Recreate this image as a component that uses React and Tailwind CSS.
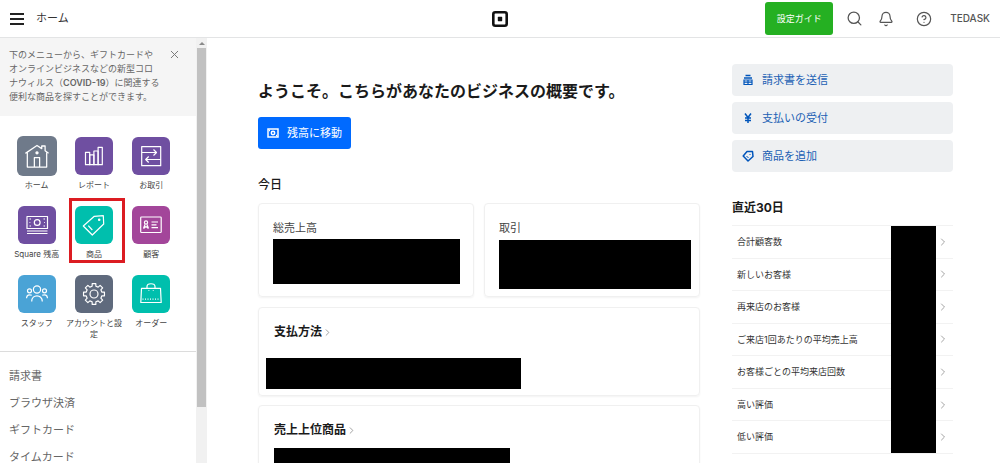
// App.jsx
import React from 'react';
import { Bell, ChevronRight, CircleHelp, Search, X } from 'lucide-react';

// 8-tooth gear outline centred on 19,19
const gearPoints = Array.from({ length: 8 })
  .flatMap((_, i) => {
    const base = (i * Math.PI) / 4;
    return [
      [base - 0.24, 8],
      [base - 0.17, 10.6],
      [base + 0.17, 10.6],
      [base + 0.24, 8],
    ].map(([a, r]) => `${(19 + r * Math.sin(a)).toFixed(2)},${(19 - r * Math.cos(a)).toFixed(2)}`);
  })
  .join(' ');

const apps = [
  {
    name: 'ホーム',
    color: 'bg-[#6f7a8a]',
    large: true,
    icon: (
      <>
        <path d="M8 16.5 19 9l4.5 3V9.500h3.200V14l3.300 2.500" />
        <path d="M9.800 15.500V29.500H28.200V15.500" />
        <path d="M16.500 29.500V20.500h5V29.500" />
        <circle cx="19" cy="16" r="1" fill="white" />
      </>
    ),
  },
  {
    name: 'レポート',
    color: 'bg-[#6f4fa1]',
    icon: (
      <>
        <path d="M10.500 15.300h4.200V27.700h-4.200z" />
        <path d="M14.700 17.800h4.200V27.700h-4.200z" />
        <path d="M18.900 14h4.200V27.700h-4.200z" />
        <path d="M23.100 10.300h4.200V27.700h-4.200z" />
      </>
    ),
  },
  {
    name: 'お取引',
    color: 'bg-[#6f4fa1]',
    icon: (
      <>
        <rect x="9.7" y="9.7" width="19" height="19" />
        <path d="M9.700 15.500H24.500M21.500 12.500l3 3-3 3" />
        <path d="M28.700 22.500H13.700M16.700 19.500l-3 3 3 3" />
      </>
    ),
  },
  {
    name: 'Square 残高',
    color: 'bg-[#6f4fa1]',
    icon: (
      <>
        <rect x="9" y="10.5" width="20.5" height="12" />
        <circle cx="19.2" cy="16.5" r="2.9" />
        <path d="M11.500 13h1.500M25.500 13H27M11.500 20h1.500M25.500 20H27M11.500 16.500h.8M26.200 16.500h.8" />
        <path d="M9 25H29.500M9 27.500H29.500" />
      </>
    ),
  },
  {
    name: '商品',
    color: 'bg-[#00bfad]',
    marked: true,
    icon: (
      <>
        <path d="M19.300 10.300 28.300 9.700 28.700 18 17.300 29 8.300 20z" />
        <circle cx="24.2" cy="13.8" r="0.7" fill="white" />
        <path d="M13.300 19.700 17.300 24" />
      </>
    ),
  },
  {
    name: '顧客',
    color: 'bg-[#a3469a]',
    icon: (
      <>
        <rect x="8.7" y="11" width="20.5" height="15.500" rx="0.8" />
        <circle cx="14" cy="16.5" r="1.6" />
        <path d="M11.500 22.500 13 18.500M16.500 22.500 15 18.500M11.500 22.500 14 20.500 16.500 22.500" />
        <path d="M19.500 16H26M19.500 18.800H24.500M19.500 21.600H26" />
      </>
    ),
  },
  {
    name: 'スタッフ',
    color: 'bg-[#4aa3d6]',
    icon: (
      <>
        <circle cx="19" cy="14.500" r="3.600" />
        <path d="M13.700 26.500C13.700 19 24.300 19 24.300 26.500" />
        <circle cx="11.500" cy="15.800" r="2" />
        <circle cx="26.500" cy="15.800" r="2" />
        <path d="M8.500 23.300C8.700 20 11 19.200 13.800 20.300" />
        <path d="M29.500 23.300C29.300 20 27 19.200 24.200 20.300" />
      </>
    ),
  },
  {
    name: 'アカウントと設定',
    color: 'bg-[#5f6a7d]',
    icon: (
      <>
        <polygon points={gearPoints} />
        <circle cx="19" cy="19" r="4" />
      </>
    ),
  },
  {
    name: 'オーダー',
    color: 'bg-[#00bfad]',
    icon: (
      <>
        <path d="M9.500 13.300H28.500L29.200 27.500H8.800z" />
        <path d="M15 13.300V11.500C15 7.800 23 7.800 23 11.500V13.300" />
        <path d="M16.500 15.500h.8M20.800 15.500h.8" />
        <path d="M10.500 24.200H28" strokeDasharray="1 1.5" />
      </>
    ),
  },
];

const menuItems = ['請求書', 'ブラウザ決済', 'ギフトカード', 'タイムカード'];

const actions = [
  {
    name: '請求書を送信',
    icon: (
      <>
        <path d="M3.500 1.500h5M2 4h8" />
        <path d="M2 6h8v4.500H2zM2 8.200h8M6 6v4.500" strokeWidth="1.200" />
      </>
    ),
  },
  { name: '支払いの受付', icon: <path d="M3 1.500 6 5.500 9 1.500M6 5.500V11M3 6h6M3 8.500h6" /> },
  {
    name: '商品を追加',
    icon: (
      <>
        <path d="M5 1.500h5.500L11 6.500 6 11 1.200 6z" strokeLinejoin="round" />
        <path d="M7.500 4.500h1M4.500 6l2 2" strokeWidth="1" />
      </>
    ),
  },
];

const stats = [
  '合計顧客数',
  '新しいお客様',
  '再来店のお客様',
  'ご来店1回あたりの平均売上高',
  'お客様ごとの平均来店回数',
  '高い評価',
  '低い評価',
];

const Header = () => (
  <header className="grid grid-cols-[1fr_auto_1fr] items-center h-[38px] shrink-0 border-b border-[#e3e4e5] bg-white">
    <div className="flex items-center gap-3 pl-[10px]">
      <button aria-label="メニュー" className="flex flex-col gap-[3px] w-[14px]">
        <span className="h-[2px] w-full bg-[#222]" />
        <span className="h-[2px] w-full bg-[#222]" />
        <span className="h-[2px] w-full bg-[#222]" />
      </button>
      <span className="text-[11px] text-[#333]">ホーム</span>
    </div>
    <svg className="w-4 h-4" viewBox="0 0 16 16">
      <rect x="1.300" y="1.300" width="13.400" height="13.400" rx="2" fill="none" stroke="#111" strokeWidth="2.600" />
      <rect x="5.800" y="5.800" width="4.400" height="4.400" rx="0.6" fill="#111" />
    </svg>
    <div className="flex items-center justify-end pr-[10px] text-[#555]">
      <button className="h-[33px] w-[68px] mr-[13px] rounded-[3px] bg-[#25b022] text-[9px] text-white">設定ガイド</button>
      <button aria-label="検索" className="mr-[15px]">
        <Search size={17} strokeWidth={1.8} />
      </button>
      <button aria-label="通知" className="mr-[22px]">
        <Bell size={16} strokeWidth={1.8} />
      </button>
      <button aria-label="ヘルプ" className="mr-[18px]">
        <CircleHelp size={16} strokeWidth={1.8} />
      </button>
      <button className="text-[10px] font-medium">TEDASK</button>
    </div>
  </header>
);

const AppTile = ({ app }) => (
  <a href="#" className="relative flex flex-col items-center">
    {app.marked && <span className="absolute -top-2 left-1 -right-[2px] h-[65px] border-[3px] border-[#dc1c22]" />}
    <span className="flex items-center justify-center h-[38px]">
      <svg
        className={`${app.large ? 'w-10 h-10' : 'w-[38px] h-[38px]'} shrink-0 rounded-[6px] ${app.color}`}
        viewBox="0 0 38 38"
        fill="none"
        stroke="white"
        strokeWidth="1.2"
        strokeLinejoin="round"
      >
        {app.icon}
      </svg>
    </span>
    <span className="mt-[5px] text-center text-[8px] leading-[11px] text-[#444]">{app.name}</span>
  </a>
);

const Sidebar = () => (
  <aside className="flex w-[207px] shrink-0 overflow-hidden">
    <div className="flex-1">
      <div className="flex items-start justify-between h-[78px] pl-[9px] pr-[15px] pt-[10px] bg-[#f5f5f5]">
        <p className="text-[9px] leading-[14px] text-[#666]">
          下のメニューから、ギフトカードや
          <br />
          オンラインビジネスなどの新型コロ
          <br />
          ナウィルス（<b className="font-semibold">COVID-19</b>）に関連する
          <br />
          便利な商品を探すことができます。
        </p>
        <button aria-label="閉じる" className="text-[#777]">
          <X size={13} strokeWidth={1.8} />
        </button>
      </div>
      <nav className="grid grid-cols-3 auto-rows-[69px] pl-2 pr-4 pt-[21px] pb-[7px] border-b border-[#dcdcdc]">
        {apps.map((app) => (
          <AppTile key={app.name} app={app} />
        ))}
      </nav>
      <ul className="pt-[11px]">
        {menuItems.map((item) => (
          <li key={item} className="flex items-center h-[27px] pl-[9px]">
            <a href="#" className="text-[11px] text-[#666]">{item}</a>
          </li>
        ))}
      </ul>
    </div>
    {/* Scroll track */}
    <div className="w-[11px] bg-[#f1f1f1]">
      <div className="flex items-center justify-center h-[10px]">
        <span className="border-x-[3px] border-b-[3px] border-x-transparent border-b-[#8a8a8a]" />
      </div>
      <div className="h-[359px] w-[9px] mx-auto bg-[#c1c1c1]" />
    </div>
  </aside>
);

const Overview = () => (
  <section className="flex-[2] min-w-0">
    <h1 className="mt-[41px] text-[16px] leading-6 font-bold text-[#1a1a1a]">
      ようこそ。こちらがあなたのビジネスの概要です。
    </h1>
    <button className="flex items-center gap-2 h-8 mt-[14px] px-[9px] rounded-[3px] bg-[#006aff] text-[11px] text-white">
      <svg className="w-3 h-3" viewBox="0 0 12 12" fill="none" stroke="white" strokeWidth="1.500">
        <rect x="1" y="2" width="10" height="8" />
        <circle cx="6" cy="6" r="1.700" />
        <path d="M2 3.500h1M9 8.500h1" />
      </svg>
      残高に移動
    </button>
    <h2 className="mt-[27px] text-[12px] leading-[18px] font-medium text-[#1a1a1a]">今日</h2>
    <div className="grid grid-cols-2 gap-[10px] mt-[9px]">
      <div className="h-[94px] pl-[14px] pt-4 pr-2 rounded border border-[#f0f0f0] shadow-xs">
        <h3 className="text-[11px] leading-4 text-[#444]">総売上高</h3>
        <div className="h-[45px] w-[187px] max-w-full mt-[3px] bg-black" />
      </div>
      <div className="h-[94px] pl-[14px] pt-4 pr-2 rounded border border-[#f0f0f0] shadow-xs">
        <h3 className="text-[11px] leading-4 text-[#444]">取引</h3>
        <div className="h-[49px] w-[192px] max-w-full mt-1 bg-black" />
      </div>
    </div>
    <div className="h-[89px] mt-[10px] pl-[7px] pt-[15px] rounded border border-[#f0f0f0] shadow-xs">
      <h3 className="pl-2 text-[12px] leading-[18px] font-bold text-[#1a1a1a]">
        <a href="#" className="inline-flex items-center">
          支払方法
          <ChevronRight size={11} className="text-[#999]" />
        </a>
      </h3>
      <div className="h-[31px] w-[255px] mt-[17px] bg-black" />
    </div>
    <div className="mt-[9px] px-[15px] pt-[15px] pb-4 rounded border border-[#f0f0f0] shadow-xs">
      <h3 className="text-[12px] leading-[18px] font-bold text-[#1a1a1a]">
        <a href="#" className="inline-flex items-center">
          売上上位商品
          <ChevronRight size={11} className="text-[#999]" />
        </a>
      </h3>
      <div className="h-[60px] w-[236px] mt-[9px] bg-black" />
    </div>
  </section>
);

const RightColumn = () => (
  <section className="flex-1 min-w-0 pt-[26px]">
    <div className="flex flex-col gap-[6px]">
      {actions.map((action) => (
        <button
          key={action.name}
          className="flex items-center gap-2 h-8 px-[10px] rounded bg-[#eef0f2] text-[11px] text-[#1a5fb4]"
        >
          <svg className="w-3 h-3" viewBox="0 0 12 12" fill="none" stroke="#0055bb" strokeWidth="1.500">
            {action.icon}
          </svg>
          {action.name}
        </button>
      ))}
    </div>
    <h2 className="mt-[27px] text-[12px] leading-[18px] font-bold text-[#1a1a1a]">直近30日</h2>
    <div className="relative mt-2">
      <table className="w-full h-[229px] text-[9px] text-[#333] border-t border-[#f2f2f2]">
        <tbody>
          {stats.map((stat) => (
            <tr key={stat} className="border-b border-[#f2f2f2]">
              <th scope="row" className="pl-[5px] text-left font-normal">{stat}</th>
              <td className="w-4 pr-1">
                <a href="#" aria-label={stat} className="flex justify-center text-[#999]">
                  <ChevronRight size={12} strokeWidth={1.8} />
                </a>
              </td>
            </tr>
          ))}
        </tbody>
      </table>
      {/* Hidden values */}
      <div className="absolute top-px bottom-px right-[17px] w-[45px] bg-black" />
    </div>
  </section>
);

export default function App() {
  return (
    <div className="flex flex-col h-screen overflow-hidden bg-white font-[Inter,'Noto_Sans_CJK_JP',sans-serif]">
      <Header />
      <div className="flex flex-1 min-h-0">
        <Sidebar />
        <main className="flex flex-1 gap-8 min-w-0 pl-[51px] pr-[47px] overflow-hidden">
          <Overview />
          <RightColumn />
        </main>
      </div>
    </div>
  );
}
